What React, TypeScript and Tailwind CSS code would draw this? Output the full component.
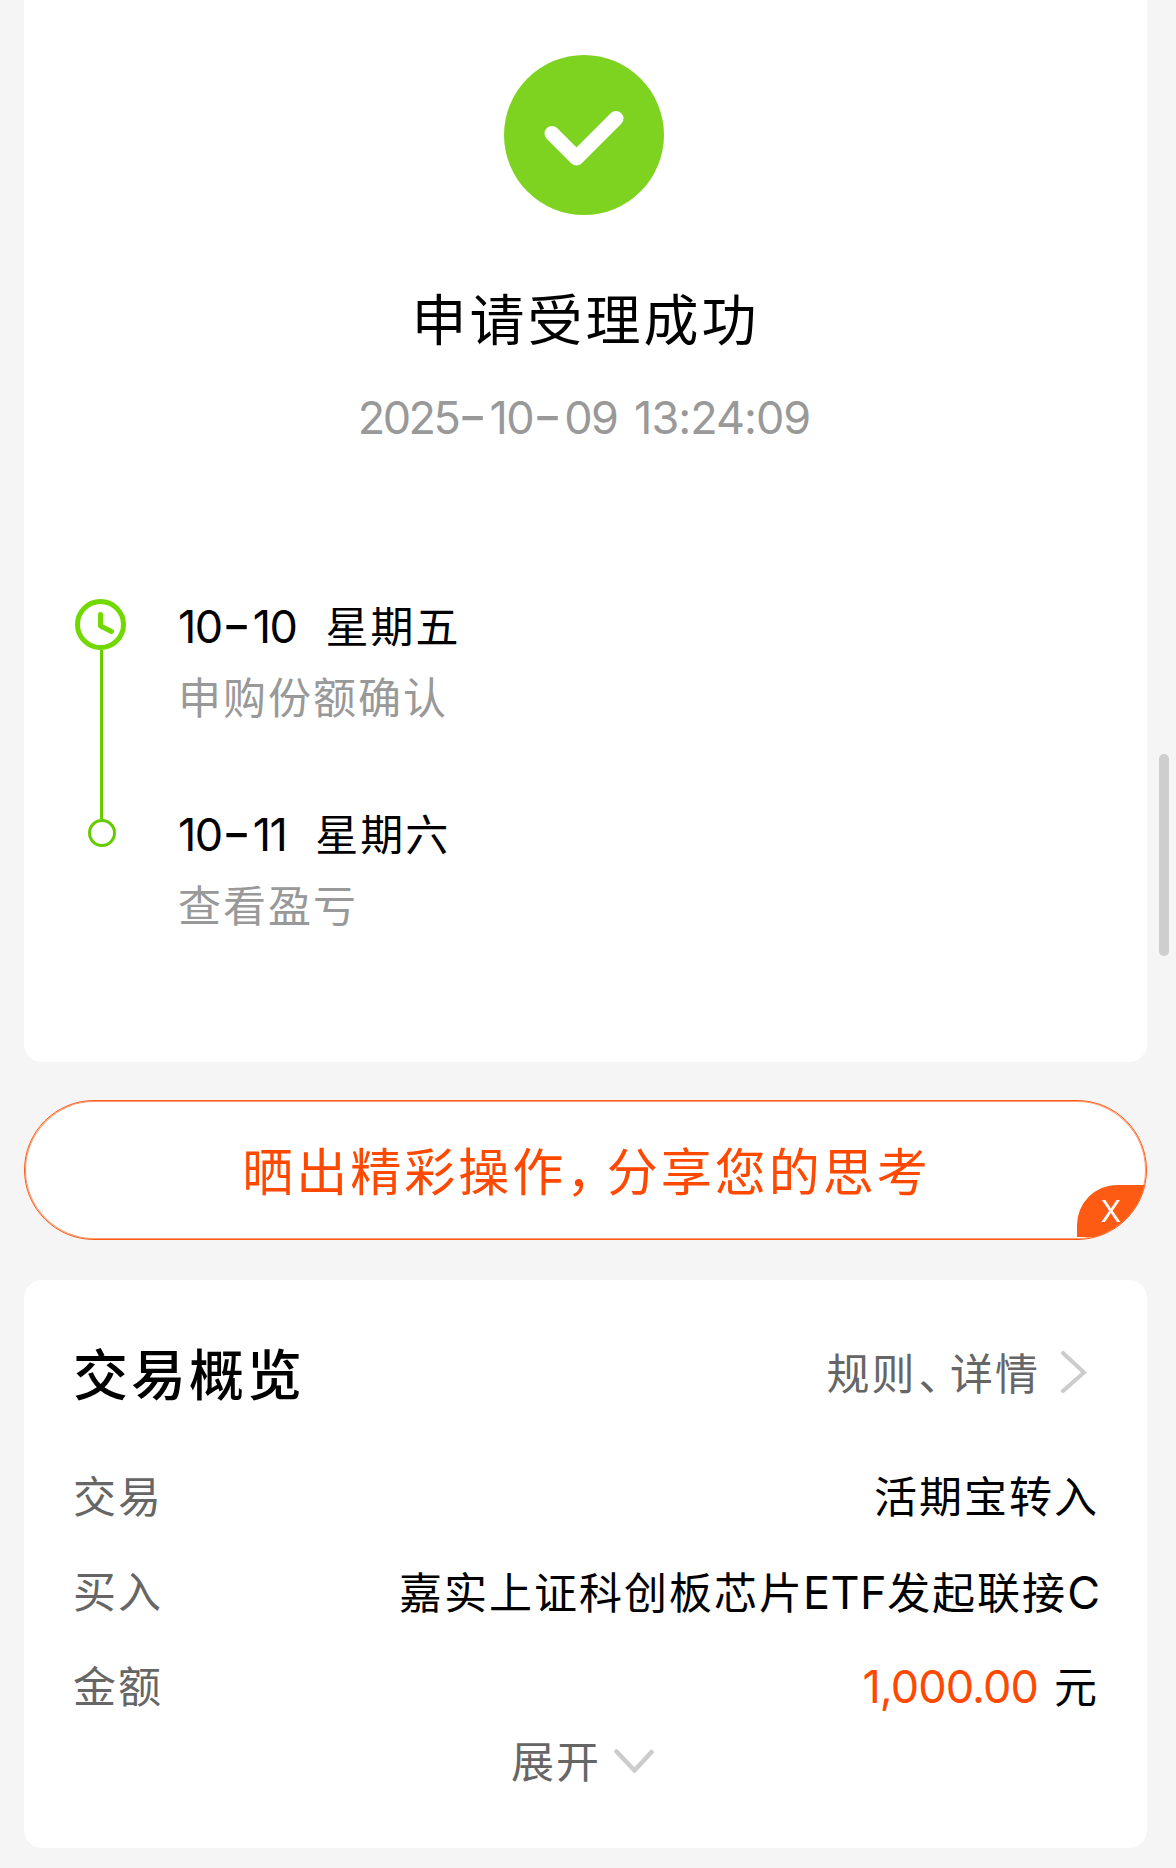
const STEPS = [
  { month: "10", date: "10", day: "星期五", text: "申购份额确认" },
  { month: "10", date: "11", day: "星期六", text: "查看盈亏" },
];

function SuccessIcon() {
  return (
    <svg className="mr-[3px] h-40 w-40" viewBox="0 0 160 160" fill="none">
      <circle cx="80" cy="80" r="80" fill="#7ed321" />
      <path d="M48 78.5 72.5 103 112 63.5" stroke="#fff" strokeWidth="15" strokeLinecap="round" strokeLinejoin="round" />
    </svg>
  );
}

function ClockIcon() {
  return (
    <svg className="-ml-px h-[51px] w-[51px] shrink-0" viewBox="0 0 51 51" fill="none" stroke="#72d900" strokeWidth="5">
      <circle cx="25.5" cy="25.5" r="23" />
      <path d="M25.5 15.5V27l11 5.5" strokeLinecap="round" strokeLinejoin="round" />
    </svg>
  );
}

function Dash() {
  return <span className="inline-block w-[31px] -translate-x-px -translate-y-[2px] scale-x-140 text-center font-medium tracking-normal">-</span>;
}

function Timeline() {
  return (
    <div className="mt-[131px] flex pl-[51px]">
      <div className="mt-[18px] flex w-[52px] flex-col items-center">
        <ClockIcon />
        <div className="h-[169px] w-[3px] bg-[#66cc00]" />
        <div className="ml-px h-7 w-7 shrink-0 rounded-full border-3 border-[#66cc00]" />
      </div>
      <div className="ml-[51px]">
        {STEPS.map((s) => (
          <div key={s.date} className="h-[208px] text-[43px] leading-[71px] tracking-[2px]">
            <div className="flex pt-[11px]">
              <span className="text-[45px] leading-[69px] tracking-[-1.5px]">{s.month}<Dash />{s.date}</span>
              <span className="ml-[29px]">{s.day}</span>
            </div>
            <div className="text-[#999]">{s.text}</div>
          </div>
        ))}
      </div>
    </div>
  );
}

function ShareButton() {
  return (
    <div className="relative mt-[38px] flex h-[140px] items-center justify-center overflow-hidden rounded-full border border-[#fd5a14] bg-white shadow-[inset_0_0_0_1px_#fd5a1499]">
      <span className="pt-[5px] pl-[2px] text-[51px] leading-[70px] tracking-[3px] text-[#ff4800]">
        晒出精彩操作<span className="mr-[12px] [font-feature-settings:'halt']">，</span>分享您的思考
      </span>
      <button className="absolute right-0 bottom-[2px] h-[52px] w-[69px] rounded-tl-[40px] bg-[#fd5a14] pr-[1px] text-[30px] leading-[53px] text-white">
        X
      </button>
    </div>
  );
}

function Overview() {
  return (
    <section className="mt-10 h-[568px] rounded-[18px] bg-white px-[49px] pt-[59px] text-[43px] tracking-[2px]">
      <div className="flex h-[72px] items-center justify-between">
        <h2 className="text-[55px] leading-[72px] font-medium tracking-[3px]">交易概览</h2>
        <div className="flex items-center pr-[11px] pb-[2px] text-[#666]">
          <span>规则<span className="mr-[8px] ml-[2px] [font-feature-settings:'halt']">、</span>详情</span>
          <svg className="mb-[5px] ml-[19px] h-[42px] w-[28px]" viewBox="0 0 28 42" fill="none" stroke="#ccc" strokeWidth="4" strokeLinecap="round">
            <path d="M4 2 25 21.5 4 40" />
          </svg>
        </div>
      </div>
      <dl className="mt-[39px] leading-[95px]">
        <div className="flex h-[95px] justify-between">
          <dt className="text-[#666]">交易</dt>
          <dd className="-mr-px">活期宝转入</dd>
        </div>
        <div className="flex h-[95px] justify-between">
          <dt className="text-[#666]">买入</dt>
          <dd className="-mr-px">
            嘉实上证科创板芯片<span className="-ml-px text-[45px] tracking-[0.5px]">ETF</span>发起联接<span className="text-[45px] tracking-[-1px]">C</span>
          </dd>
        </div>
        <div className="flex h-[95px] justify-between">
          <dt className="text-[#666]">金额</dt>
          <dd className="-mr-px flex">
            <span className="mr-[16px] text-[45px] leading-[93px] tracking-[-0.9px] text-[#ff4800]">1,000.00</span>元
          </dd>
        </div>
      </dl>
      <div className="flex h-[54px] items-center justify-center pr-[6px] text-[#666]">
        <span>展开</span>
        <svg className="mb-[3px] ml-[13px] h-[24px] w-[40px]" viewBox="0 0 40 24" fill="none" stroke="#ccc" strokeWidth="4.5" strokeLinecap="round" strokeLinejoin="round">
          <path d="M2.5 2.5 20.5 21.5 37.5 3" />
        </svg>
      </div>
    </section>
  );
}

export default function App() {
  return (
    <main className="relative h-[1868px] w-[1176px] overflow-hidden bg-[#f5f5f5] pr-[29px] pl-6 font-['Inter','Noto_Sans_CJK_SC',sans-serif] text-black">
      <section className="h-[1062px] rounded-b-[18px] bg-white pt-[55px]">
        <div className="flex flex-col items-center">
          <SuccessIcon />
          <h1 className="mt-[65px] text-[55px] leading-[80px] tracking-[3px]">申请受理成功</h1>
          <div className="mt-[26px] mr-[3px] text-[45px] leading-[64px] tracking-[-1px] text-[#999]">
            <span className="tracking-[-2.5px]">2025</span>
            <Dash />
            <span className="tracking-[-1.5px]">10</span>
            <Dash />
            <span className="tracking-[-1.5px]">09</span>
            <span className="tracking-[4px]"> </span>13:24:09
          </div>
        </div>
        <Timeline />
      </section>
      <ShareButton />
      <Overview />
      <div className="absolute top-[754px] right-[7px] h-[202px] w-[10px] rounded-full bg-[#cecece]" />
    </main>
  );
}
